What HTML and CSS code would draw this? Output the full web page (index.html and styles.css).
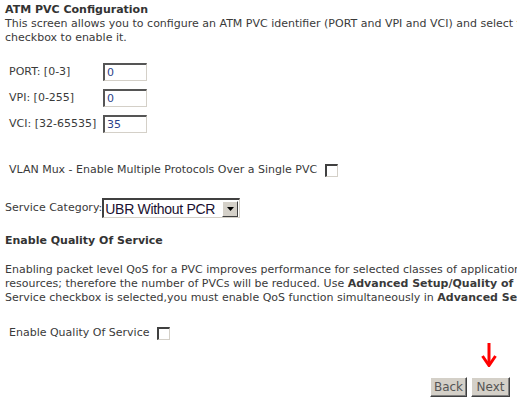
FILE: index.html
```html
<!DOCTYPE html>
<html>
<head>
<meta charset="utf-8">
<title>ATM PVC Configuration</title>
<link rel="stylesheet" href="styles.css">
</head>
<body>
<form class="page">
  <div class="title">ATM PVC Configuration</div>
  <div class="intro">This screen allows you to configure an ATM PVC identifier (PORT and VPI and VCI) and select the<br>checkbox to enable it.</div>

  <div class="ids">
    <label class="id-label">PORT: [0-3]</label><input class="field" type="text" value="0">
    <label class="id-label">VPI: [0-255]</label><input class="field" type="text" value="0">
    <label class="id-label">VCI: [32-65535]</label><input class="field" type="text" value="35">
  </div>

  <div class="line vlan"><span>VLAN Mux - Enable Multiple Protocols Over a Single PVC</span><input class="check check-vlan" type="checkbox"></div>

  <div class="line service">
    <span>Service Category:</span>
    <span class="select">
      <span class="select-text">UBR Without PCR</span>
      <span class="select-btn"><svg width="7" height="4" viewBox="0 0 7 4"><path d="M0 0h7L3.5 4z" fill="#000"/></svg></span>
    </span>
  </div>

  <div class="heading">Enable Quality Of Service</div>
  <div class="qos-text">Enabling packet level QoS for a PVC improves performance for selected classes of applications. QoS cannot be set for CBR and Realtime VBR. QoS consumes system<br>resources; therefore the number of PVCs will be reduced. Use <b>Advanced Setup/Quality of Service</b> to assign priorities for the applications. If Enable Quality Of<br>Service checkbox is selected,you must enable QoS function simultaneously in <b>Advanced Setup/Quality of Service</b>.</div>

  <div class="line qos-line"><span>Enable Quality Of Service</span><input class="check check-qos" type="checkbox"></div>

  <div class="arrow-row">
    <svg class="arrow" width="16" height="24" viewBox="0 0 16 24"><path d="M8 0V21" stroke="#f00" stroke-width="3" fill="none"/><path d="M1.5 13L8 22.5L14.5 13" stroke="#f00" stroke-width="3" fill="none"/></svg>
  </div>
  <div class="buttons">
    <button type="button" class="btn btn-back">Back</button>
    <button type="button" class="btn btn-next">Next</button>
  </div>
</form>
</body>
</html>
```
FILE: styles.css
```css
html, body {
  margin: 0;
  padding: 0;
  overflow: hidden;
  background: #fff;
}
body {
  width: 517px;
  height: 409px;
  font-family: "DejaVu Sans", "Liberation Sans", sans-serif;
  font-size: 11px;
  line-height: 14px;
  color: #3a3a3a;
}
.page {
  margin: 0;
  padding: 3px 0 0 5px;
  display: flex;
  flex-direction: column;
  white-space: nowrap;
}
.title, .heading {
  font-weight: bold;
  color: #333;
}
.intro {
  height: 28px;
}
.ids {
  margin-top: 14px;
  display: grid;
  grid-template-columns: 94px 44px;
  grid-auto-rows: 26px;
  align-items: center;
  padding-left: 4px;
}
.field {
  box-sizing: border-box;
  width: 44px;
  height: 18px;
  margin: 0;
  padding: 0 0 0 2px;
  font-family: inherit;
  font-size: 11px;
  color: #2d3f8a;
  background: #fff;
  border: 1px solid #d4d0c8;
  border-top: 2px solid #555;
  border-left: 2px solid #555;
  outline: none;
}
.line {
  display: flex;
  align-items: center;
  height: 20px;
}
.vlan {
  margin-top: 23px;
  padding-left: 4px;
}
.check {
  appearance: none;
  -webkit-appearance: none;
  box-sizing: border-box;
  width: 13px;
  height: 13px;
  margin: 0;
  background: #fff;
  border: 1px solid #d4d0c8;
  border-top: 2px solid #404040;
  border-left: 2px solid #404040;
}
.check-vlan { margin-left: 8px; }
.check-qos { margin-left: 8px; }
.service {
  margin-top: 18px;
}
.select {
  display: inline-flex;
  align-items: center;
  box-sizing: border-box;
  width: 138px;
  height: 20px;
  margin-left: 0;
  border: 1px solid #d4d0c8;
  border-top: 2px solid #404040;
  border-left: 2px solid #404040;
  background: #fff;
}
.select-text {
  flex: 1;
  font-family: "Liberation Sans", Arial, sans-serif;
  font-size: 14px;
  letter-spacing: -0.3px;
  color: #1a1030;
  padding-left: 1px;
}
.select-btn {
  box-sizing: border-box;
  width: 16px;
  height: 16px;
  display: flex;
  align-items: center;
  justify-content: center;
  background: #d4d0c8;
  border: 1px solid;
  border-color: #fff #404040 #404040 #fff;
  margin-right: 1px;
}
.heading {
  margin-top: 16px;
}
.qos-text {
  margin-top: 15px;
}
.qos-line {
  margin-top: 18px;
  padding-left: 4px;
}
.arrow-row {
  display: flex;
  justify-content: flex-end;
  width: 512px;
  margin-top: 0;
  height: 34px;
}
.arrow {
  margin-right: 20px;
}
.buttons {
  display: flex;
  justify-content: flex-end;
  gap: 4px;
  width: 505px;
}
.btn {
  box-sizing: border-box;
  height: 20px;
  margin: 0;
  padding: 0 2px;
  font-family: inherit;
  font-size: 12px;
  color: #555;
  background: #d4d0c8;
  border: 1px solid;
  border-color: #fff #404040 #404040 #fff;
  box-shadow: inset -1px -1px 0 #808080;
}
.btn-back { width: 37px; }
.btn-next { width: 39px; }
```
